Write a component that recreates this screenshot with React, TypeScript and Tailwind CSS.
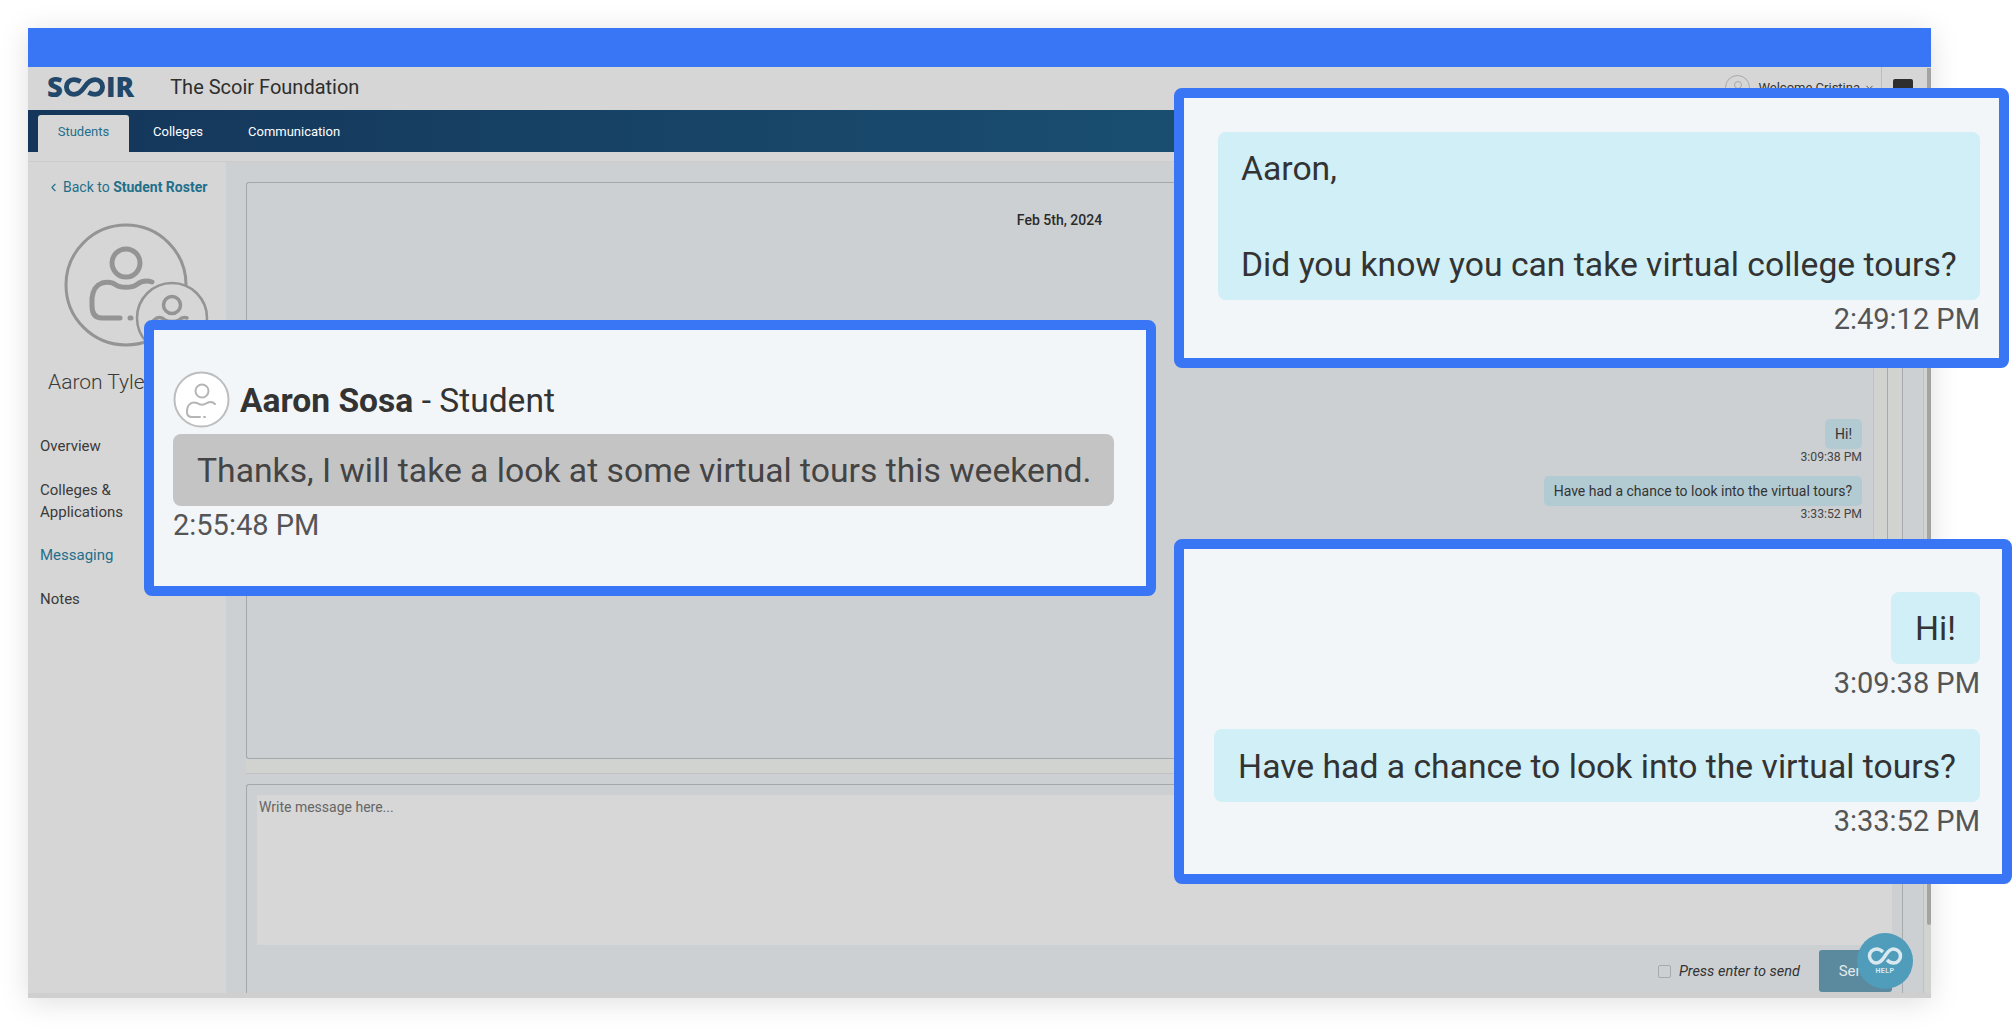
import { ChevronLeft, ChevronDown } from "lucide-react";

const font = { fontFamily: "Roboto, sans-serif" };

function ScoirLogo() {
  return (
    <div className="flex items-center h-[20px] text-[#21486b] text-[27.500px] leading-[20px] font-extrabold font-['Open_Sans',sans-serif]">
      <span className="w-[17px]">S</span>
      <svg width="41" height="20" viewBox="0 0 42 20" fill="none" stroke="#21486b" strokeWidth="5">
        <path d="M17 4.5C14.5 3 12.5 2.5 10 2.5a7.5 7.5 0 0 0 0 15C16 17.5 19 13 21 10C23 7 26 2.5 32 2.5a7.5 7.5 0 0 1 0 15C29.500 17.500 27.500 17 25 15.500" />
      </svg>
      <span className="ml-[1px]">IR</span>
    </div>
  );
}

function InfinityIcon() {
  return (
    <svg width="36" height="18" viewBox="0 0 36 18" fill="none" stroke="#d9e9ef" strokeWidth="3.5">
      <path d="M16 5C14 3 12 2 9.500 2a7 7 0 0 0 0 14C14 16 16 12 18 9C20 6 22 2 26.500 2a7 7 0 0 1 0 14C24 16 22 15 20 13" />
    </svg>
  );
}

function RosterAvatar() {
  return (
    <svg width="150" height="140" viewBox="0 0 150 140" fill="none" stroke="#949494" strokeLinecap="round" className="ml-[32px] mt-[24px]">
      <circle cx="66" cy="65" r="60" strokeWidth="3" />
      <circle cx="66" cy="43" r="14" strokeWidth="5" />
      <path strokeWidth="5" d="M92 62C86 60 80 62 76 65C72 68 60 68 56 65C52 62 46 62 42 63C36 65 33 70 32 78L32 86C32 94 35 98 42 98L60 98" />
      <path strokeWidth="5" d="M70 98L71 98" />
      <circle cx="112" cy="98" r="35" strokeWidth="2.500" fill="#d6d6d6" />
      <circle cx="112" cy="85" r="8.500" strokeWidth="3.500" />
      <path strokeWidth="3.500" d="M127 98C124 97 121 98 119 100C116 102 108 102 105 100C103 98 100 97 97 98C93 100 91 103 91 107" />
    </svg>
  );
}

function StudentAvatar() {
  return (
    <svg width="57" height="57" viewBox="0 0 57 57" fill="#ffffff" stroke="#bdbdbd" strokeLinecap="round">
      <circle cx="28.500" cy="28.500" r="27" strokeWidth="2" />
      <g fill="none" stroke="#b5b5b5" strokeWidth="2">
        <circle cx="29" cy="20" r="6.500" />
        <path d="M42 33C39 30 36 31 34 32C31 34 27 34 24 32C21 31 19 31 17 33C14 35 14 38 14 41C14 44 16 46 19 46L27 46" />
        <path d="M31 46L32 46" />
      </g>
    </svg>
  );
}

const navItems = ["Students", "Colleges", "Communication"];

function Sidebar() {
  return (
    <aside className="w-[198px] shrink-0 bg-[#d6d6d6] flex flex-col">
      <a className="flex items-center ml-[19px] mt-[16px] h-[18px] text-[14px] text-[#1f6f8b]">
        <ChevronLeft size={13} strokeWidth={2} className="mr-[3px]" />
        <span>
          Back to <b className="font-bold">Student Roster</b>
        </span>
      </a>
      <RosterAvatar />
      <div className="ml-[20px] mt-[10px] text-[21px] leading-[24px] text-[#3a3a3a] font-light whitespace-nowrap">
        Aaron Tyler
      </div>
      <ul className="ml-[12px] mt-[41px] flex flex-col gap-[21.5px] text-[15px] leading-[22px] text-[#3a3a3a]">
        <li>Overview</li>
        <li>
          Colleges &amp;
          <br />
          Applications
        </li>
        <li className="text-[#1f6f8b]">Messaging</li>
        <li>Notes</li>
      </ul>
    </aside>
  );
}

function MessageThread() {
  return (
    <div className="flex h-[592px]">
      <div className="flex-1 flex flex-col">
        <div className="h-[577px] border border-[#a5a8ab] border-r-0 rounded-tl-[3px] rounded-bl-[3px] flex flex-col items-end pr-[11px]">
          <div className="self-center ml-[10px] mt-[27px] h-[20px] text-[14px] leading-[20px] font-medium text-[#2b2b2b]">
            Feb 5th, 2024
          </div>
          <div className="mt-[189px] h-[30px] flex items-center px-[10px] rounded-[5px] bg-[#b2cbd3] text-[14px] text-[#333333]">
            Hi!
          </div>
          <div className="h-[16px] text-[12.200px] leading-[16px] text-[#444444] mb-[11px]">3:09:38 PM</div>
          <div className="h-[30px] flex items-center px-[10px] rounded-[5px] bg-[#b2cbd3] text-[14px] text-[#333333]">
            Have had a chance to look into the virtual tours?
          </div>
          <div className="h-[16px] text-[12.200px] leading-[16px] text-[#444444]">3:33:52 PM</div>
        </div>
        <div className="h-[15px] bg-[#d1d3d1] border-b border-[#bfc1c2]" />
      </div>
      <div className="w-[15px] bg-[#d1d3d1] border-l border-r border-l-[#bfc1c2] border-r-[#a8a8a8]" />
      <div className="w-[14px] bg-[#d1d3d1]" />
    </div>
  );
}

function Composer() {
  return (
    <div className="mt-[10px] flex-1 min-h-0 border-t border-l border-[#a5a8ab] rounded-tl-[3px] px-[10px] pt-[10px] overflow-hidden">
      <div className="h-[150px] bg-[#d7d7d7] px-[2px] pt-[3px] text-[14px] leading-[18px] text-[#666666]">
        Write message here...
      </div>
      <div className="flex justify-end items-start mt-[5px]">
        <div className="flex items-center h-[42px]">
          <span className="w-[13px] h-[13px] border border-[#a9a9a9] rounded-[2px]" />
          <span className="ml-[8px] pt-[1px] text-[14.500px] italic text-[#333333]">Press enter to send</span>
        </div>
        <button className="ml-[19px] w-[73px] h-[42px] pt-[1px] rounded-[3px] bg-[#5b8a9f] text-[15px] text-[#e2e9ec]">
          Send
        </button>
      </div>
    </div>
  );
}

function Window() {
  return (
    <div className="relative w-[1903px] h-[970px] ml-[28px] flex flex-col shadow-[0_4px_28px_rgba(0,0,0,0.13)] bg-[#d6d6d6]">
      <div className="h-[39px] bg-[#3876f6]" />
      <header className="h-[43px] flex items-center pl-[19px] pb-[3px] bg-[#d6d6d6]">
        <ScoirLogo />
        <h1 className="ml-[36px] text-[20px] text-[#2e2e2e]">The Scoir Foundation</h1>
        <div className="ml-auto flex items-center h-full pr-[18px]">
          <div className="w-[25px] h-[25px] rounded-full border border-[#a8a8a8] flex justify-center pt-[5px]">
            <div className="w-[8px] h-[8px] rounded-full border border-[#a8a8a8]" />
          </div>
          <span className="ml-[8px] pt-[2px] text-[13px] text-[#333333]">Welcome Cristina</span>
          <ChevronDown size={11} className="ml-[4px] text-[#444444]" />
          <div className="ml-[6px] w-[1px] h-full bg-[#bdbdbd]" />
          <div className="ml-[11px] w-[20px] h-[16px] rounded-[2px] bg-[#2e2e2e]" />
        </div>
      </header>
      <nav className="h-[42px] flex items-end pl-[10px] bg-gradient-to-r from-[#14365a] to-[#1d5f80] text-[13px] text-white">
        {navItems.map((item, index) =>
          index === 0 ? (
            <div key={item} className="w-[91px] h-[37px] pt-[7px] text-center rounded-t-[3px] bg-[#d6d6d6] text-[#1f6f8b]">
              {item}
            </div>
          ) : (
            <div key={item} className="h-[37px] pt-[7px] ml-[24px] pr-[21px]">
              {item}
            </div>
          ),
        )}
      </nav>
      <div className="h-[10px] bg-[#d6d6d6] border-b border-[#cccccc]" />
      <div className="flex-1 min-h-0 flex">
        <Sidebar />
        <main className="flex-1 flex bg-[#cdd0d3]">
          <div className="ml-[20px] pt-[20px] w-[1656px] flex flex-col min-h-0">
            <MessageThread />
            <Composer />
          </div>
          <div className="w-[21px] border-l border-[#a8abad]" />
          <div className="flex-1 border-l border-[#bfc1c2] bg-[#d1d3d1]" />
        </main>
      </div>
      <div className="h-[5px] bg-[#cfcfcf]" />
      <div className="absolute right-0 top-[40px] w-[4px] h-[857px] rounded-b-[2px] bg-[#a3a3a3]" />
    </div>
  );
}

export default function App() {
  return (
    <div className="relative w-[2012px] h-[1029px] overflow-hidden bg-white pt-[28px]" style={font}>
      <Window />

      <div className="absolute left-[1857px] top-[933px] w-[56px] h-[56px] rounded-full bg-[#4f9cbb] flex flex-col items-center pt-[14px]">
        <InfinityIcon />
        <span className="mt-[2px] text-[7px] leading-[9px] font-bold tracking-[0.5px] text-[#d9e9ef]">HELP</span>
      </div>

      <section className="absolute left-[144px] top-[320px] w-[1012px] h-[276px] box-border border-[10px] border-[#3876f6] rounded-[8px] bg-[#f2f6f9] pt-[41px] pl-[19px] pr-[32px]">
        <div className="flex items-center h-[57px] mb-[6px]">
          <StudentAvatar />
          <div className="ml-[10px] pt-[3px] text-[33.600px] text-[#333333]">
            <b className="font-bold">Aaron Sosa</b> - Student
          </div>
        </div>
        <div className="h-[72px] flex items-center pl-[24px] pt-[2px] rounded-[8px] bg-[#c4c4c4] text-[33.700px] text-[#444444]">
          Thanks, I will take a look at some virtual tours this weekend.
        </div>
        <div className="mt-[4px] h-[30px] text-[29px] leading-[30px] text-[#555555]">2:55:48 PM</div>
      </section>

      <section className="absolute left-[1174px] top-[88px] w-[835px] h-[280px] box-border border-[10px] border-[#3876f6] rounded-[8px] bg-[#f2f6f9] pt-[34px] pl-[34px] pr-[19px] flex flex-col items-end">
        <div className="w-full h-[168px] rounded-[8px] bg-[#d0eff7] pl-[23px] pt-[13px] text-[33.700px] leading-[48px] text-[#333333]">
          Aaron,
          <br />
          <br />
          Did you know you can take virtual college tours?
        </div>
        <div className="mt-[4px] h-[30px] text-[29px] leading-[30px] text-[#555555]">2:49:12 PM</div>
      </section>

      <section className="absolute left-[1174px] top-[539px] w-[838px] h-[345px] box-border border-[10px] border-[#3876f6] rounded-[8px] bg-[#f2f6f9] pt-[43px] pr-[22px] flex flex-col items-end">
        <div className="h-[72px] flex items-center px-[24px] pt-[2px] rounded-[8px] bg-[#d0eff7] text-[33.700px] text-[#333333]">Hi!</div>
        <div className="mt-[4px] h-[30px] text-[29px] leading-[30px] text-[#555555]">3:09:38 PM</div>
        <div className="mt-[31px] h-[73px] flex items-center px-[24px] pt-[3px] rounded-[8px] bg-[#d0eff7] text-[33.700px] text-[#333333]">
          Have had a chance to look into the virtual tours?
        </div>
        <div className="mt-[4px] h-[30px] text-[29px] leading-[30px] text-[#555555]">3:33:52 PM</div>
      </section>
    </div>
  );
}
